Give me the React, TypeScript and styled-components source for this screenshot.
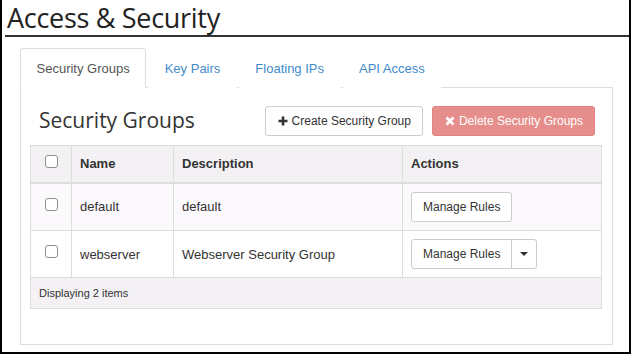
import React from "react";
import styled, { createGlobalStyle } from "styled-components";

const Global = createGlobalStyle`
  html, body { margin: 0; padding: 0; background: #fff; }
  body { font-family: "Liberation Sans", Arial, sans-serif; color: #333; }
  * { box-sizing: border-box; }
`;

const Frame = styled.div`
  width: 631px;
  height: 354px;
  border: 2px solid #000;
  border-top: none;
  background: #fff;
  overflow: hidden;
`;

const Header = styled.div`
  margin: 0 0 0 3px;
  border-bottom: 2px solid #333;
`;

const Title = styled.h1`
  margin: 0;
  padding-left: 2px;
  font-family: "Open Sans", "Noto Sans", sans-serif;
  font-weight: 400;
  font-size: 27px;
  letter-spacing: -0.3px;
  line-height: 35px;
  height: 35px;
  color: #222;
`;

const Body = styled.div`
  padding: 11px 16px 0 18px;
`;

const Tabs = styled.ul`
  display: flex;
  list-style: none;
  margin: 0;
  padding: 0;
  height: 40px;
`;

const Tab = styled.li<{ $active?: boolean }>`
  margin-right: 2px;
  padding: 0 15.5px;
  height: 40px;
  display: flex;
  align-items: center;
  font-size: 13px;
  color: ${(p) => (p.$active ? "#555" : "#428bca")};
  border: 1px solid ${(p) => (p.$active ? "#ddd" : "transparent")};
  border-bottom-color: ${(p) => (p.$active ? "#fff" : "transparent")};
  border-radius: 4px 4px 0 0;
  background: #fff;
  position: relative;
  z-index: 1;
`;

const Panel = styled.div`
  margin-top: -1px;
  border: 1px solid #ddd;
  height: 258px;
  padding: 18px 10px 0 9px;
`;

const Toolbar = styled.div`
  display: flex;
  align-items: center;
  height: 30px;
  padding: 0 7px 0 9px;
  margin-bottom: 9px;
`;

const PanelTitle = styled.h2`
  margin: 0 0 2px;
  flex: 1;
  font-family: "Open Sans", "Noto Sans", sans-serif;
  font-weight: 400;
  font-size: 21px;
  color: #333;
  line-height: 28px;
`;

const Btn = styled.button<{ $danger?: boolean }>`
  display: inline-flex;
  align-items: center;
  gap: 4px;
  height: 30px;
  padding: 0 11px 0 12px;
  font-family: "Liberation Sans", Arial, sans-serif;
  font-size: 12px;
  border-radius: 3px;
  border: 1px solid ${(p) => (p.$danger ? "#e5827f" : "#ccc")};
  background: ${(p) => (p.$danger ? "#e58e8b" : "#fff")};
  color: ${(p) => (p.$danger ? "#fff" : "#333")};
  margin-left: ${(p) => (p.$danger ? "9px" : "0")};
`;

const Table = styled.table`
  width: 572px;
  border-collapse: collapse;
  border: 1px solid #ddd;
  font-size: 13px;
  table-layout: fixed;
`;

const Th = styled.th<{ $w?: number }>`
  width: ${(p) => (p.$w ? `${p.$w}px` : "auto")};
  text-align: left;
  font-weight: bold;
  padding: 0 8px;
  height: 37px;
  border: 1px solid #ddd;
  border-bottom: 2px solid #ddd;
  background: #f4f1f4;
  color: #333;
`;

const Tr = styled.tr<{ $striped?: boolean }>`
  background: ${(p) => (p.$striped ? "#fcf9fc" : "#fff")};
`;

const Td = styled.td<{ $h: number }>`
  padding: 0 8px;
  height: ${(p) => p.$h}px;
  border: 1px solid #ddd;
  color: #333;
  vertical-align: middle;
`;

const CheckCell = styled.div`
  display: flex;
  justify-content: center;
  margin-top: -5px;
`;

const Check = styled.input.attrs({ type: "checkbox" })`
  appearance: none;
  margin: 0;
  width: 13px;
  height: 13px;
  border: 1px solid #8f8f8f;
  border-radius: 3px;
  background: #fff;
`;

const Footer = styled.td`
  height: 31px;
  padding: 0 8px;
  background: #f4f1f4;
  font-size: 11px;
  color: #333;
  border: 1px solid #ddd;
`;

const Group = styled.div`
  display: inline-flex;
`;

const ActBtn = styled.button<{ $left?: boolean; $caret?: boolean }>`
  height: 30px;
  padding: ${(p) => (p.$caret ? "0 8px" : "0 11px")};
  font-family: "Liberation Sans", Arial, sans-serif;
  font-size: 12px;
  color: #333;
  background: #fff;
  border: 1px solid #ccc;
  border-radius: ${(p) => (p.$left ? "3px 0 0 3px" : p.$caret ? "0 3px 3px 0" : "3px")};
  margin-left: ${(p) => (p.$caret ? "-1px" : "0")};
  display: inline-flex;
  align-items: center;
`;

const Caret = styled.span`
  width: 0;
  height: 0;
  border-left: 4px solid transparent;
  border-right: 4px solid transparent;
  border-top: 4px solid #333;
`;

const PlusIcon = () => (
  <svg width="10" height="10" viewBox="0 0 10 10">
    <path d="M5 0.5V9.5M0.5 5H9.5" stroke="#333" strokeWidth="2.6" />
  </svg>
);

const XIcon = () => (
  <svg width="10" height="10" viewBox="0 0 10 10">
    <path d="M1.5 1.5L8.5 8.5M8.5 1.5L1.5 8.5" stroke="#fff" strokeWidth="2.6" />
  </svg>
);

export default function App() {
  return (
    <>
      <Global />
      <Frame>
        <Header>
          <Title>Access &amp; Security</Title>
        </Header>
        <Body>
          <Tabs>
            <Tab $active>Security Groups</Tab>
            <Tab>Key Pairs</Tab>
            <Tab>Floating IPs</Tab>
            <Tab>API Access</Tab>
          </Tabs>
          <Panel>
            <Toolbar>
              <PanelTitle>Security Groups</PanelTitle>
              <Btn>
                <PlusIcon />
                Create Security Group
              </Btn>
              <Btn $danger>
                <XIcon />
                Delete Security Groups
              </Btn>
            </Toolbar>
            <Table>
              <thead>
                <tr>
                  <Th $w={41}>
                    <CheckCell>
                      <Check />
                    </CheckCell>
                  </Th>
                  <Th $w={102}>Name</Th>
                  <Th $w={229}>Description</Th>
                  <Th>Actions</Th>
                </tr>
              </thead>
              <tbody>
                <Tr $striped>
                  <Td $h={48}>
                    <CheckCell>
                      <Check />
                    </CheckCell>
                  </Td>
                  <Td $h={48}>default</Td>
                  <Td $h={48}>default</Td>
                  <Td $h={48}>
                    <ActBtn>Manage Rules</ActBtn>
                  </Td>
                </Tr>
                <Tr>
                  <Td $h={47}>
                    <CheckCell>
                      <Check />
                    </CheckCell>
                  </Td>
                  <Td $h={47}>webserver</Td>
                  <Td $h={47}>Webserver Security Group</Td>
                  <Td $h={47}>
                    <Group>
                      <ActBtn $left>Manage Rules</ActBtn>
                      <ActBtn $caret>
                        <Caret />
                      </ActBtn>
                    </Group>
                  </Td>
                </Tr>
              </tbody>
              <tfoot>
                <tr>
                  <Footer colSpan={4}>Displaying 2 items</Footer>
                </tr>
              </tfoot>
            </Table>
          </Panel>
        </Body>
      </Frame>
    </>
  );
}
